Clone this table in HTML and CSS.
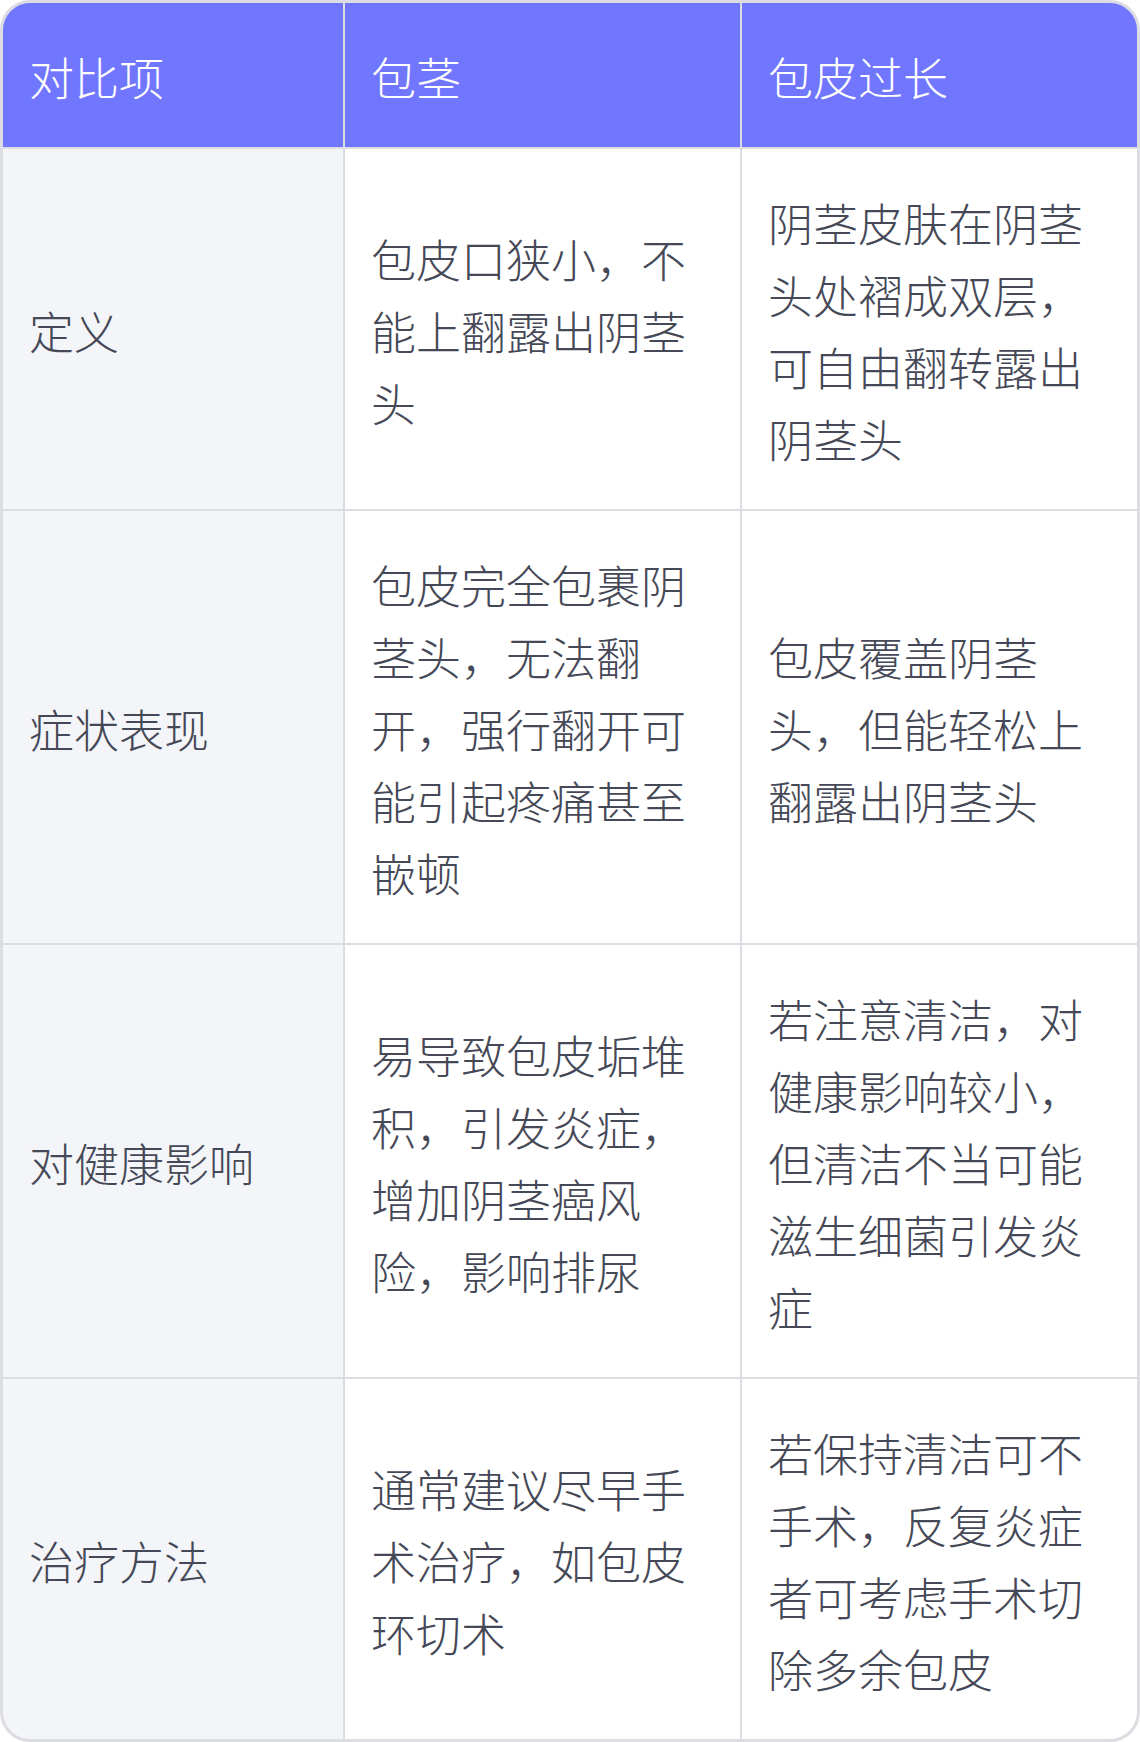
FILE: index.html
```html
<!DOCTYPE html>
<html lang="zh-CN">
<head>
<meta charset="utf-8">
<link rel="stylesheet" href="styles.css">
</head>
<body>
<div class="table">
  <div class="cell head">对比项</div>
  <div class="cell head">包茎</div>
  <div class="cell head">包皮过长</div>

  <div class="cell label">定义</div>
  <div class="cell">包皮口狭小，不能上翻露出阴茎头</div>
  <div class="cell">阴茎皮肤在阴茎头处褶成双层，可自由翻转露出阴茎头</div>

  <div class="cell label">症状表现</div>
  <div class="cell">包皮完全包裹阴茎头，无法翻开，强行翻开可能引起疼痛甚至嵌顿</div>
  <div class="cell">包皮覆盖阴茎头，但能轻松上翻露出阴茎头</div>

  <div class="cell label">对健康影响</div>
  <div class="cell">易导致包皮垢堆积，引发炎症，增加阴茎癌风险，影响排尿</div>
  <div class="cell">若注意清洁，对健康影响较小，但清洁不当可能滋生细菌引发炎症</div>

  <div class="cell label">治疗方法</div>
  <div class="cell">通常建议尽早手术治疗，如包皮环切术</div>
  <div class="cell">若保持清洁可不手术，反复炎症者可考虑手术切除多余包皮</div>
</div>
</body>
</html>
```

FILE: styles.css
```css
html, body {
  margin: 0;
  padding: 0;
  background: #ffffff;
}

.table {
  width: 1140px;
  box-sizing: border-box;
  border: 3px solid #dcdde2;
  border-radius: 30px;
  overflow: hidden;
  display: grid;
  grid-template-columns: 340px 395px 395px;
  gap: 2px;
  background: #dcdde2;
  font-family: "Noto Sans CJK SC", "Noto Sans", sans-serif;
  font-size: 45px;
  line-height: 72px;
  font-weight: 300;
  color: #454856;
}

.cell {
  background: #ffffff;
  padding: 38px 30px 34px 26px;
  display: flex;
  align-items: center;
  word-break: break-all;
}

.cell.head {
  background: #7176ff;
  color: #ffffff;
}

.cell.label {
  background: #f4f5f9;
}
```
